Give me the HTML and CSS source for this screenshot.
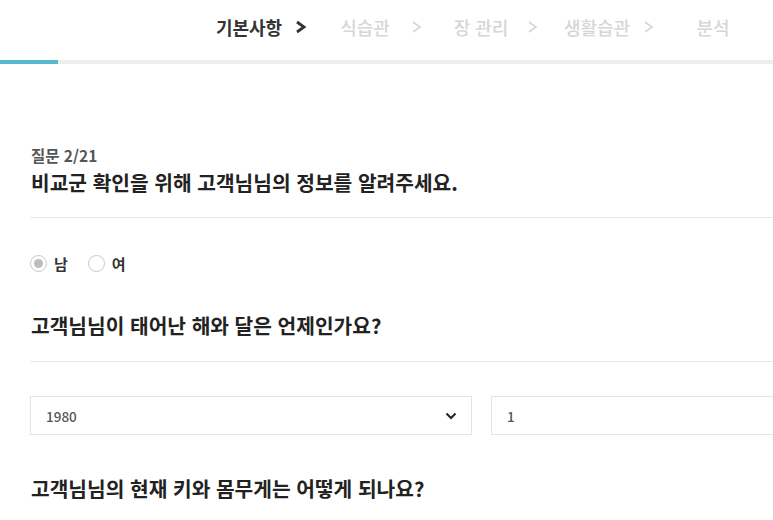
FILE: index.html
```html
<!DOCTYPE html>
<html lang="ko">
<head>
<meta charset="utf-8">
<title>기본사항</title>
<link rel="stylesheet" href="styles.css">
</head>
<body>
<header class="steps">
  <div class="step active"><span class="step-name">기본사항</span><svg class="chev" viewBox="0 0 12 14"><polyline points="2,2 9,7 2,12"/></svg></div>
  <div class="step"><span class="step-name">식습관</span><svg class="chev" viewBox="0 0 12 14"><polyline points="2,2 9,7 2,12"/></svg></div>
  <div class="step"><span class="step-name">장 관리</span><svg class="chev" viewBox="0 0 12 14"><polyline points="2,2 9,7 2,12"/></svg></div>
  <div class="step"><span class="step-name">생활습관</span><svg class="chev" viewBox="0 0 12 14"><polyline points="2,2 9,7 2,12"/></svg></div>
  <div class="step"><span class="step-name">분석</span></div>
</header>
<div class="progress"><div class="progress-fill" style="width:58px"></div></div>

<main class="content">
  <p class="q-count">질문 2/21</p>
  <h2 class="q-title">비교군 확인을 위해 고객님님의 정보를 알려주세요.</h2>
  <hr class="divider">
  <div class="radios">
    <label class="radio"><span class="dot checked"></span><span>남</span></label>
    <label class="radio"><span class="dot"></span><span>여</span></label>
  </div>

  <h2 class="q-title q-next">고객님님이 태어난 해와 달은 언제인가요?</h2>
  <hr class="divider">
  <div class="fields">
    <div class="field"><span>1980</span><svg class="caret" viewBox="0 0 12 8"><polyline points="1.5,1.5 6,6 10.5,1.5"/></svg></div>
    <div class="field"><span>1</span></div>
  </div>

  <h2 class="q-title q-last">고객님님의 현재 키와 몸무게는 어떻게 되나요?</h2>
</main>
</body>
</html>
```

FILE: styles.css
```css
html, body {
  margin: 0;
  padding: 0;
  background: #fff;
  overflow: hidden;
}
body {
  font-family: "Noto Sans CJK KR", "Noto Sans", sans-serif;
  color: #222;
  width: 773px;
}

.steps {
  display: flex;
  justify-content: flex-end;
  align-items: center;
  height: 54px;
  padding-right: 2px;
}
.step {
  width: 116px;
  display: grid;
  grid-template-columns: 12px 1fr 12px;
  align-items: center;
  font-size: 18px;
  font-weight: 500;
  color: #d6d6d6;
}
.step-name {
  grid-column: 2;
  text-align: center;
  white-space: nowrap;
}
.chev {
  grid-column: 3;
  width: 12px;
  height: 14px;
  fill: none;
  stroke: #d6d6d6;
  stroke-width: 1.6;
}
.step.active {
  color: #333;
  font-weight: 700;
}
.step.active .chev {
  stroke: #333;
  stroke-width: 2.8;
}

.progress {
  margin-top: 6px;
  height: 4px;
  background: #eeeeee;
}
.progress-fill {
  height: 100%;
  background: #56b8c9;
}

.content {
  width: 1000px;
  padding-left: 30px;
}
.q-count {
  margin: 82px 0 0 1px;
  font-size: 15.5px;
  line-height: 19px;
  font-weight: 700;
  color: #555;
}
.q-title {
  margin: 4px 0 0 1px;
  font-size: 20.3px;
  line-height: 26px;
  font-weight: 700;
  color: #222;
}
.divider {
  margin: 22px 0 0;
  border: 0;
  height: 1px;
  background: #e6e6e6;
}
.radios {
  display: flex;
  gap: 20px;
  margin-top: 35px;
  height: 20px;
  align-items: center;
}
.radio {
  display: flex;
  align-items: center;
  gap: 7px;
  font-size: 15px;
  font-weight: 700;
  color: #333;
}
.dot {
  box-sizing: border-box;
  width: 17px;
  height: 17px;
  border-radius: 50%;
  border: 1px solid #c8c8c8;
  background: #fff;
  display: flex;
  align-items: center;
  justify-content: center;
}
.dot.checked::before {
  content: "";
  width: 9px;
  height: 9px;
  border-radius: 50%;
  background: #bdbdbd;
}
.q-next {
  margin-top: 39px;
}
.q-next + .divider {
  margin-top: 23px;
}
.fields {
  display: flex;
  gap: 19px;
  margin-top: 34px;
}
.field {
  box-sizing: border-box;
  width: 442px;
  height: 39px;
  border: 1px solid #e4e4e4;
  display: flex;
  align-items: center;
  justify-content: space-between;
  padding: 0 14px 0 15px;
  font-size: 13.5px;
  font-weight: 500;
  color: #555;
}
.caret {
  width: 12px;
  height: 8px;
  fill: none;
  stroke: #222;
  stroke-width: 2;
}
.q-last {
  margin-top: 40px;
}
```
